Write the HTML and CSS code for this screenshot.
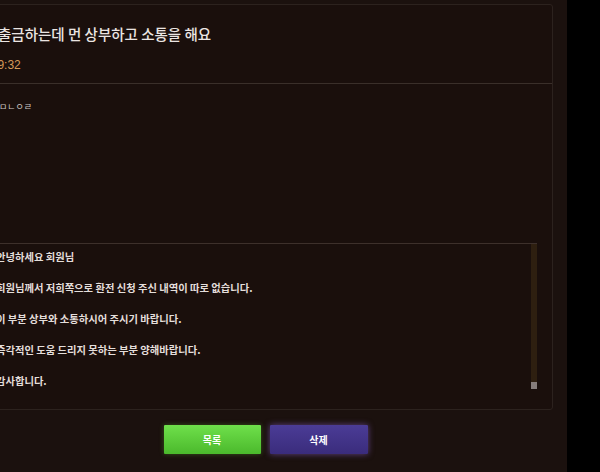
FILE: index.html
```html
<!DOCTYPE html>
<html>
<head>
<meta charset="utf-8">
<title>게시글 보기</title>
<link rel="stylesheet" href="styles.css">
</head>
<body>
<div class="page">
  <div class="board">
    <div class="post-head">
      <h1 class="post-title">출금하는데 먼 상부하고 소통을 해요</h1>
      <div class="post-date">2024-05-13 19:32</div>
    </div>
    <div class="post-body">
      <p class="post-text">ㅁㄴㅇㄹ</p>
      <div class="reply">
        <div class="reply-text">
          <p>안녕하세요 회원님</p>
          <p>회원님께서 저희쪽으로 환전 신청 주신 내역이 따로 없습니다.</p>
          <p>이 부분 상부와 소통하시어 주시기 바랍니다.</p>
          <p>즉각적인 도움 드리지 못하는 부분 양해바랍니다.</p>
          <p>감사합니다.</p>
        </div>
        <div class="reply-scroll"><span class="reply-thumb"></span></div>
      </div>
    </div>
  </div>
  <div class="actions">
    <button class="btn btn-list">목록</button>
    <button class="btn btn-delete">삭제</button>
  </div>
</div>
</body>
</html>
```
FILE: styles.css
```css
body {
  margin: 0;
  background-color: #000;
  font-family: "Noto Sans CJK KR", "Noto Sans", sans-serif;
  color: #e6e0dd;
}
.page {
  width: 567px;
  height: 472px;
  background-color: #1b110e;
  overflow: hidden;
  padding-top: 4px;
  box-sizing: border-box;
}
.board {
  margin-left: -30px;
  width: 583px;
  height: 406px;
  box-sizing: border-box;
  border: 1px solid #2c221e;
  border-radius: 3px;
  background-color: #1a0f0c;
}
.post-head {
  padding: 19px 0 10px 27px;
  border-bottom: 1px solid #3a2f2a;
}
.post-title {
  margin: 0;
  font-size: 14.5px;
  line-height: 20px;
  font-weight: 500;
  color: #ebe5e2;
}
.post-date {
  margin: 13px 0 0 -72px;
  font-family: "Liberation Sans", sans-serif;
  font-size: 12px;
  line-height: 16px;
  color: #d49a5a;
}
.post-body {
  padding: 18px 15px 0 15px;
}
.post-text {
  margin: 0 0 0 13px;
  font-size: 9px;
  line-height: 10px;
  color: #cfc8c5;
}
.reply {
  margin-top: 131px;
  height: 145px;
  border-top: 1px solid #3d302b;
  display: flex;
}
.reply-text {
  flex: 1;
  padding: 5px 10px 0 10px;
}
.reply-text p {
  margin: 0 0 15px 0;
  font-size: 10.3px;
  line-height: 16px;
  font-weight: 700;
  color: #e4dedb;
}
.reply-scroll {
  width: 6px;
  background-color: #2e1f10;
  display: flex;
  flex-direction: column;
  justify-content: flex-end;
}
.reply-thumb {
  height: 7px;
  background-color: #857c7a;
}
.actions {
  display: flex;
  justify-content: center;
  gap: 9px;
  margin-top: 15px;
  padding-right: 36px;
}
.btn {
  width: 97px;
  height: 29px;
  border: none;
  border-radius: 1px;
  font-family: "Noto Sans CJK KR", sans-serif;
  font-size: 10px;
  font-weight: 700;
  color: #fff;
  cursor: pointer;
}
.btn-list {
  background: linear-gradient(#6fe04b, #4bb92c);
  box-shadow: 0 0 5px rgba(110, 210, 60, 0.35);
}
.btn-delete {
  width: 98px;
  background: linear-gradient(#4b3c96, #3a2c7c);
  box-shadow: 0 0 6px rgba(140, 100, 210, 0.6);
}
```
